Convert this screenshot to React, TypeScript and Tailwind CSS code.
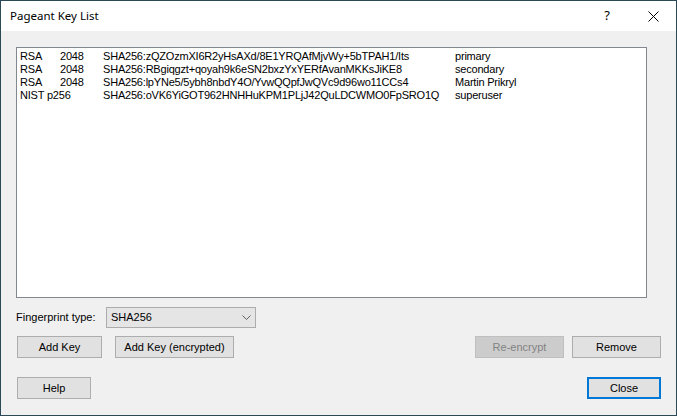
import React from 'react';

type KeyRow = {
  type: string;
  bits?: string;
  fp: string;
  comment: string;
};

const keys: KeyRow[] = [
  { type: 'RSA', bits: '2048', fp: 'SHA256:zQZOzmXI6R2yHsAXd/8E1YRQAfMjvWy+5bTPAH1/Its', comment: 'primary' },
  { type: 'RSA', bits: '2048', fp: 'SHA256:RBgiqgzt+qoyah9k6eSN2bxzYxYERfAvanMKKsJiKE8', comment: 'secondary' },
  { type: 'RSA', bits: '2048', fp: 'SHA256:lpYNe5/5ybh8nbdY4O/YvwQQpfJwQVc9d96wo11CCs4', comment: 'Martin Prikryl' },
  { type: 'NIST p256', fp: 'SHA256:oVK6YiGOT962HNHHuKPM1PLjJ42QuLDCWMO0FpSRO1Q', comment: 'superuser' },
];

function Button({
  label,
  width,
  disabled,
  isDefault,
}: {
  label: string;
  width: string;
  disabled?: boolean;
  isDefault?: boolean;
}) {
  // width comes in as a full class name
  const border = isDefault
    ? 'border-2 border-[#0078d7] bg-[#e1e1e1] text-black'
    : disabled
      ? 'border border-[#bfbfbf] bg-[#cccccc] text-[#838383]'
      : 'border border-[#adadad] bg-[#e1e1e1] text-black';
  return (
    <div className={`${width} h-[22px] flex items-center justify-center text-[11px] ${border}`}>
      {label}
    </div>
  );
}

export default function App() {
  return (
    <div
      className="w-[677px] h-[416px] flex flex-col border border-[#2b4a58] bg-[#f0f0f0] text-black"
      style={{ fontFamily: '"Liberation Sans", Arial, sans-serif' }}
    >
      {/* Title bar */}
      <div className="h-[30px] bg-white flex items-center">
        <div className="pl-[9px] flex-1 text-[11.5px]" style={{ fontFamily: '"Noto Sans", sans-serif' }}>
          Pageant Key List
        </div>
        <div className="w-[46px] flex justify-center text-[13px]" style={{ fontFamily: '"Noto Sans", sans-serif' }}>
          ?
        </div>
        <div className="w-[46px] flex justify-center">
          <svg width="11" height="11" viewBox="0 0 11 11">
            <path d="M0.5 0.5 L10.5 10.5 M10.5 0.5 L0.5 10.5" stroke="#000" strokeWidth="1" />
          </svg>
        </div>
      </div>

      {/* Body */}
      <div className="flex-1 flex flex-col pl-[15px] pr-[15px] pt-[16px]">
        {/* Key list */}
        <div className="w-[631px] h-[251px] border border-[#828790] bg-white pt-[2px] pl-[3px] text-[11px] leading-[13px] tracking-[-0.2px]">
          {keys.map((k, i) => (
            <div key={i} className="grid grid-cols-[40px_43px_352px_1fr] whitespace-nowrap">
              {k.bits ? (
                <>
                  <div>{k.type}</div>
                  <div>{k.bits}</div>
                </>
              ) : (
                <div className="col-span-2">{k.type}</div>
              )}
              <div>{k.fp}</div>
              <div>{k.comment}</div>
            </div>
          ))}
        </div>

        {/* Fingerprint type */}
        <div className="mt-[9px] flex items-center h-[21px] text-[11px]">
          <div className="w-[90px]">Fingerprint type:</div>
          <div className="w-[150px] h-[21px] border border-[#acacac] bg-[#e5e5e5] flex items-center pl-[4px] pr-[4px]">
            <span className="flex-1">SHA256</span>
            <svg width="9" height="5" viewBox="0 0 9 5">
              <path d="M0.5 0.5 L4.5 4.5 L8.5 0.5" fill="none" stroke="#606060" strokeWidth="1" />
            </svg>
          </div>
        </div>

        {/* Key buttons */}
        <div className="mt-[8px] flex pl-[1px]">
          <Button label="Add Key" width="w-[85px]" />
          <div className="w-[13px]" />
          <Button label="Add Key (encrypted)" width="w-[119px]" />
          <div className="flex-1" />
          <Button label="Re-encrypt" width="w-[89px]" disabled />
          <div className="w-[8px]" />
          <Button label="Remove" width="w-[89px]" />
        </div>

        {/* Dialog buttons */}
        <div className="mt-[19px] flex justify-between pl-[1px]">
          <Button label="Help" width="w-[74px]" />
          <Button label="Close" width="w-[74px]" isDefault />
        </div>
      </div>
    </div>
  );
}
